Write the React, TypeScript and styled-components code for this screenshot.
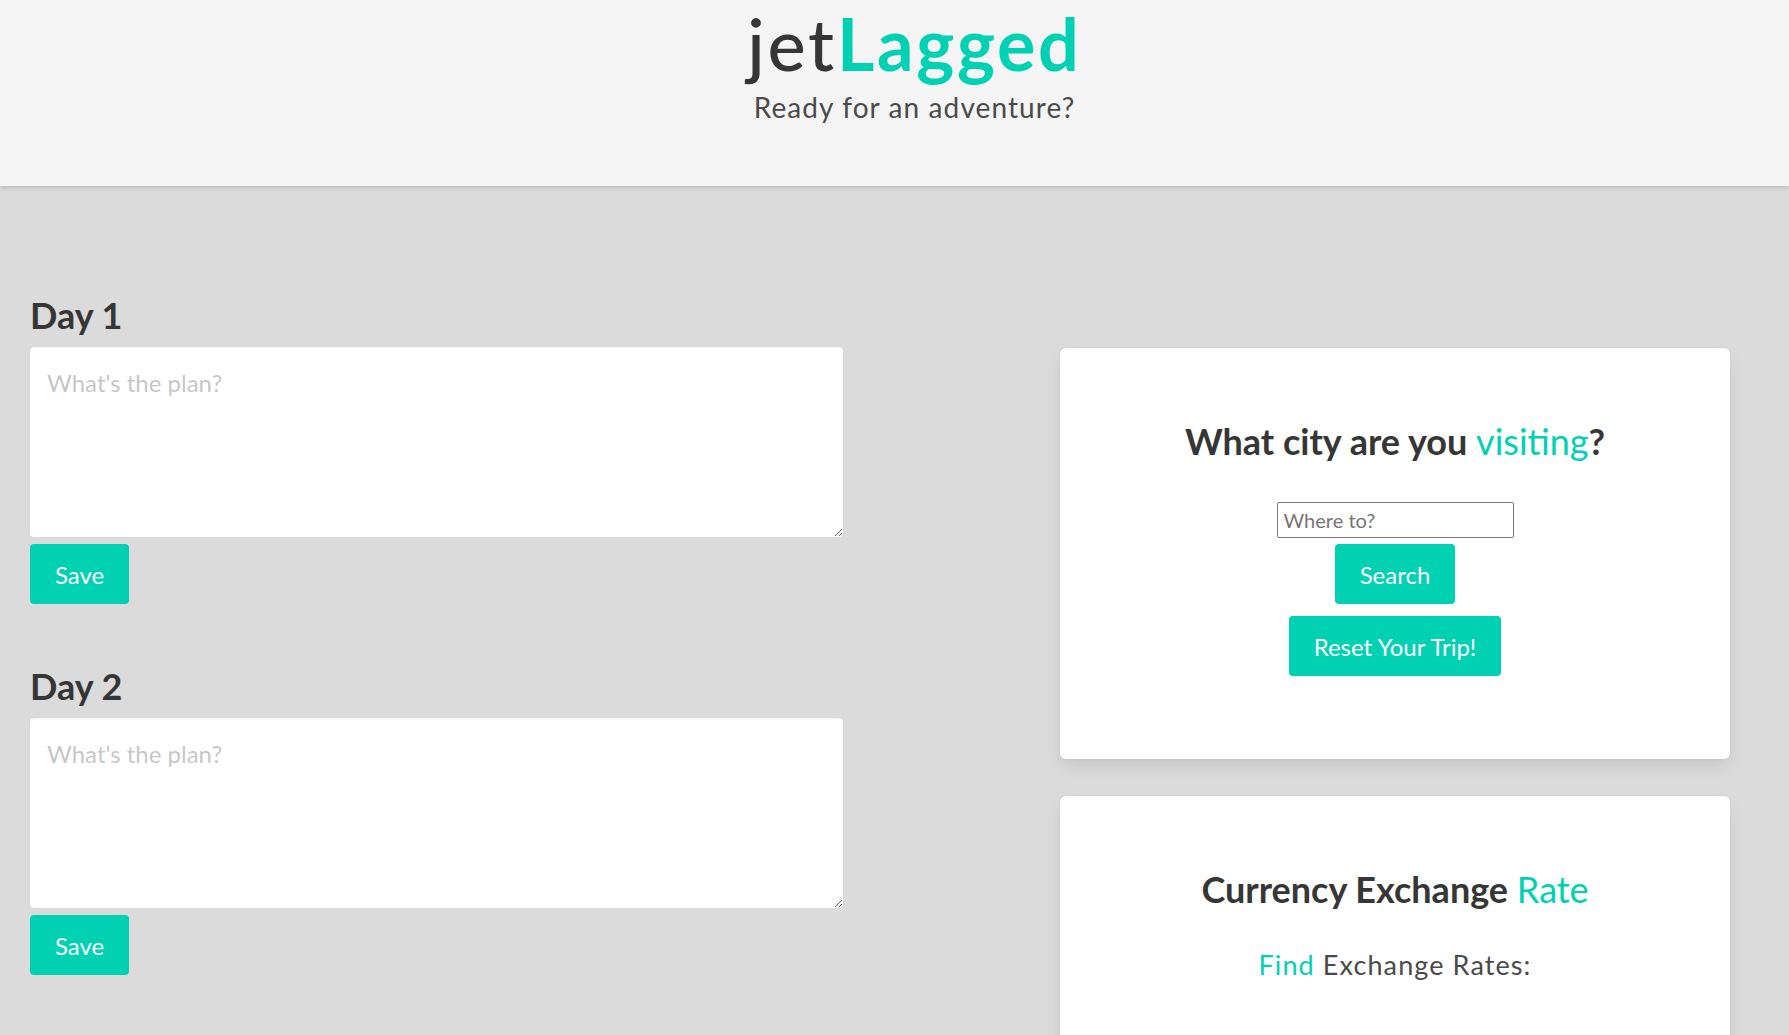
import React from 'react';
import styled, { createGlobalStyle } from 'styled-components';

const Colors = {
  primary: '#00d1b2',
  dark: '#363636',
  text: '#4a4a4a',
  page: '#dbdbdb',
  header: '#f5f5f5',
};

const GlobalStyle = createGlobalStyle`
  html, body {
    margin: 0;
    padding: 0;
  }
  body {
    background: ${Colors.page};
    font-family: Lato, "Open Sans", sans-serif;
    color: ${Colors.text};
  }
`;

const Header = styled.header`
  box-sizing: border-box;
  height: 186px;
  padding-left: 40px;
  background: ${Colors.header};
  box-shadow: 0 2px 4px rgba(10, 10, 10, 0.14);
  display: flex;
  flex-direction: column;
  align-items: center;
`;

const Brand = styled.h1`
  margin: 7px 0 0;
  font-size: 72px;
  line-height: 72px;
  font-weight: 500;
  letter-spacing: 2.7px;
  color: ${Colors.dark};
`;

const Tagline = styled.p`
  margin: 12px 0 0;
  font-size: 28px;
  line-height: 32px;
  letter-spacing: 1.1px;
  color: ${Colors.text};
`;

const Accent = styled.span<{ $weight?: number }>`
  color: ${Colors.primary};
  font-weight: ${(p) => p.$weight ?? 'inherit'};
`;

const Main = styled.main`
  display: flex;
  justify-content: space-between;
  align-items: flex-start;
  padding: 0 59px 80px 30px;
`;

const Planner = styled.section`
  width: 813px;
  padding-top: 109px;
  display: flex;
  flex-direction: column;
  gap: 62px;
`;

const DayBlock = styled.div`
  display: flex;
  flex-direction: column;
  align-items: flex-start;
`;

const Title = styled.h2`
  margin: 0;
  font-size: 36px;
  line-height: 40px;
  font-weight: 700;
  color: ${Colors.dark};
`;

const PlanInput = styled.textarea`
  box-sizing: border-box;
  width: 813px;
  height: 190px;
  margin-top: 12px;
  padding: 18px 17px;
  border: none;
  border-radius: 4px;
  background: #fff;
  box-shadow: inset 0 1px 2px rgba(10, 10, 10, 0.05);
  font-family: inherit;
  font-size: 24px;
  line-height: 1.5;
  color: ${Colors.dark};
  outline: none;
  &::placeholder {
    color: rgba(54, 54, 54, 0.3);
  }
`;

const Button = styled.button<{ $top?: number }>`
  box-sizing: border-box;
  height: 60px;
  margin-top: ${(p) => p.$top ?? 0}px;
  padding: 0 24px;
  border: 1px solid transparent;
  border-radius: 4px;
  background: ${Colors.primary};
  color: #fff;
  font-family: inherit;
  font-size: 24px;
  cursor: pointer;
`;

const Sidebar = styled.aside`
  width: 670px;
  padding-top: 162px;
  display: flex;
  flex-direction: column;
  gap: 37px;
`;

const Card = styled.div<{ $minHeight?: number }>`
  box-sizing: border-box;
  min-height: ${(p) => p.$minHeight ?? 0}px;
  padding: 73px 24px 83px;
  background: #fff;
  border-radius: 6px;
  box-shadow: 0 8px 16px -2px rgba(10, 10, 10, 0.1), 0 0 0 1px rgba(10, 10, 10, 0.02);
  display: flex;
  flex-direction: column;
  align-items: center;
`;

const CityInput = styled.input`
  box-sizing: border-box;
  width: 237px;
  height: 36px;
  margin-top: 41px;
  padding: 0 6px;
  border: 1px solid #767676;
  border-radius: 2px;
  font-family: inherit;
  font-size: 20px;
  color: ${Colors.dark};
  &::placeholder {
    color: #757575;
  }
`;

const Subheading = styled.p`
  margin: 40px 0 0;
  font-size: 27px;
  line-height: 32px;
  letter-spacing: 1.1px;
  color: ${Colors.text};
`;

const days = ['Day 1', 'Day 2'];

export default function App() {
  return (
    <>
      <GlobalStyle />
      <Header>
        <Brand>
          jet<Accent $weight={700}>Lagged</Accent>
        </Brand>
        <Tagline>Ready for an adventure?</Tagline>
      </Header>
      <Main>
        <Planner>
          {days.map((day) => (
            <DayBlock key={day}>
              <Title>{day}</Title>
              <PlanInput placeholder="What's the plan?" />
              <Button $top={7}>Save</Button>
            </DayBlock>
          ))}
        </Planner>
        <Sidebar>
          <Card>
            <Title>
              What city are you <Accent $weight={400}>visiting</Accent>?
            </Title>
            <CityInput placeholder="Where to?" />
            <Button $top={6}>Search</Button>
            <Button $top={12}>Reset Your Trip!</Button>
          </Card>
          <Card $minHeight={320}>
            <Title>
              Currency Exchange <Accent $weight={400}>Rate</Accent>
            </Title>
            <Subheading>
              <Accent>Find</Accent> Exchange Rates:
            </Subheading>
          </Card>
        </Sidebar>
      </Main>
    </>
  );
}
